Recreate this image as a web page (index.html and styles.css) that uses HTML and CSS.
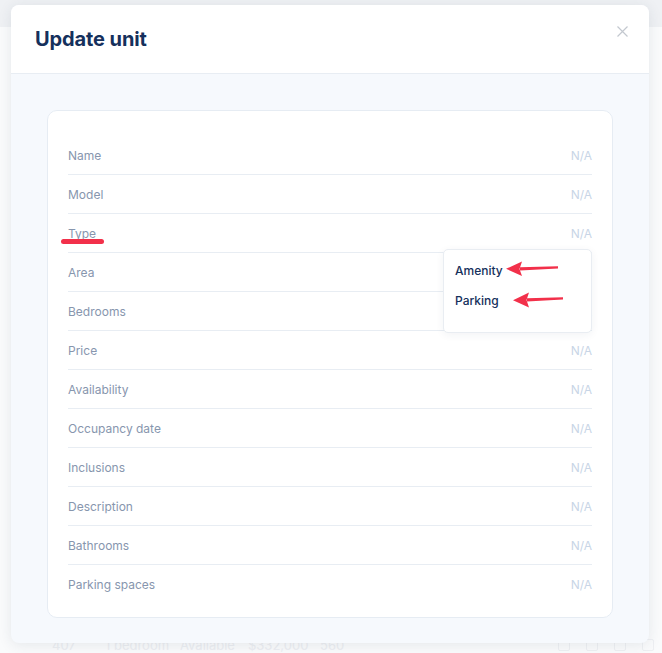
FILE: index.html
```html
<!DOCTYPE html>
<html lang="en">
<head>
    <meta charset="UTF-8">
    <meta name="viewport" content="width=device-width, initial-scale=1.0">
    <title>Update unit</title>
    <link rel="stylesheet" href="styles.css">
</head>
<body>
    <div class="page">
        <div class="topbar"></div>
        <div class="page-body">
            <div class="table-row">
                <span class="c1">407</span>
                <span class="c2">1 bedroom</span>
                <span class="c3">Available</span>
                <span class="c4">$332,000</span>
                <span class="c5">560</span>
                <span class="row-icons"><i></i><i></i><i></i><i></i></span>
            </div>
        </div>
    </div>

    <div class="modal">
        <div class="modal-header">
            <h1>Update unit</h1>
            <svg class="close" width="11" height="11" viewBox="0 0 11 11">
                <path d="M0.5 0.5 L10.5 10.5 M10.5 0.5 L0.5 10.5" stroke="#c3c8cf" stroke-width="1.2" fill="none"/>
            </svg>
        </div>
        <div class="modal-body">
            <div class="card">
                <div class="row"><span class="label">Name</span><span class="value">N/A</span></div>
                <div class="row"><span class="label">Model</span><span class="value">N/A</span></div>
                <div class="row"><span class="label">Type</span><span class="value">N/A</span></div>
                <div class="row"><span class="label">Area</span><span class="value">N/A</span></div>
                <div class="row"><span class="label">Bedrooms</span><span class="value">N/A</span></div>
                <div class="row"><span class="label">Price</span><span class="value">N/A</span></div>
                <div class="row"><span class="label">Availability</span><span class="value">N/A</span></div>
                <div class="row"><span class="label">Occupancy date</span><span class="value">N/A</span></div>
                <div class="row"><span class="label">Inclusions</span><span class="value">N/A</span></div>
                <div class="row"><span class="label">Description</span><span class="value">N/A</span></div>
                <div class="row"><span class="label">Bathrooms</span><span class="value">N/A</span></div>
                <div class="row"><span class="label">Parking spaces</span><span class="value">N/A</span></div>
            </div>
        </div>
    </div>

    <div class="dropdown">
        <div class="option">Amenity</div>
        <div class="option">Parking</div>
    </div>

    <!-- annotations -->
    <div class="underline"></div>
    <svg class="arrows" width="662" height="653" viewBox="0 0 662 653">
        <path d="M558 266.3 L520 267.3 L520 270.5 L558 268.5 Z" fill="#f2304a"/>
        <path d="M506 268.8 L522 261.5 L519.5 269 L522 276 Z" fill="#f2304a"/>
        <path d="M563 297.2 L527 298.3 L527 301.5 L563 299.4 Z" fill="#f2304a"/>
        <path d="M513 300.2 L529 292.5 L526.5 300 L529 307.5 Z" fill="#f2304a"/>
    </svg>
</body>
</html>
```

FILE: styles.css
```css
body { margin: 0; font-family: Inter, "Noto Sans", sans-serif; background: #fafbfc; width: 662px; height: 653px; overflow: hidden; position: relative; }

.page { height: 653px; display: flex; flex-direction: column; }
.topbar { height: 27px; background: #eff1f4; }
.page-body { flex: 1; display: flex; flex-direction: column; justify-content: flex-end; }
.table-row { display: flex; align-items: center; height: 16px; padding-left: 52px; font-size: 13px; color: #eceef2; }
.table-row .c1 { width: 53px; }
.table-row .c2 { width: 75px; }
.table-row .c3 { width: 68px; }
.table-row .c4 { width: 72px; }
.table-row .c5 { width: 40px; }
.row-icons { margin-left: auto; display: flex; gap: 16px; padding-right: 8px; }
.row-icons i { width: 10px; height: 10px; border: 1px solid #eef0f3; border-radius: 2px; }

.modal { position: absolute; left: 11px; top: 5px; width: 638px; height: 638px; border-radius: 8px; overflow: hidden; background: #f6f9fd; box-shadow: 0 2px 14px rgba(40, 55, 80, 0.10); display: flex; flex-direction: column; }
.modal-header { height: 68px; background: #fff; border-bottom: 1px solid #e8edf3; display: flex; align-items: center; padding: 0 24px; position: relative; }
.modal-header h1 { margin: 0; font-size: 20px; font-weight: 700; color: #15305c; letter-spacing: -0.1px; }
.close { position: absolute; right: 21px; top: 21px; }

.modal-body { padding: 36px 36px 25px 36px; }
.card { background: #fff; border: 1px solid #e6ecf3; border-radius: 10px; padding: 25px 20px 14px 20px; }
.row { height: 38px; display: flex; align-items: center; justify-content: space-between; border-bottom: 1px solid #e8edf3; font-size: 12px; }
.row:last-child { border-bottom: none; }
.label { color: #8796ae; }
.value { color: #c8d5e6; }

.dropdown { position: absolute; left: 443px; top: 249px; width: 149px; height: 84px; background: #fff; border: 1px solid #e9edf2; border-radius: 5px; box-shadow: 0 2px 8px rgba(40, 55, 80, 0.06); padding: 12px 11px; box-sizing: border-box; display: flex; flex-direction: column; gap: 13px; }
.option { font-size: 12px; font-weight: 500; color: #15305c; line-height: 17px; }

.underline { position: absolute; left: 61px; top: 239px; width: 43px; height: 5px; border-radius: 3px; background: #f2304a; }
.arrows { position: absolute; left: 0; top: 0; pointer-events: none; }
```
